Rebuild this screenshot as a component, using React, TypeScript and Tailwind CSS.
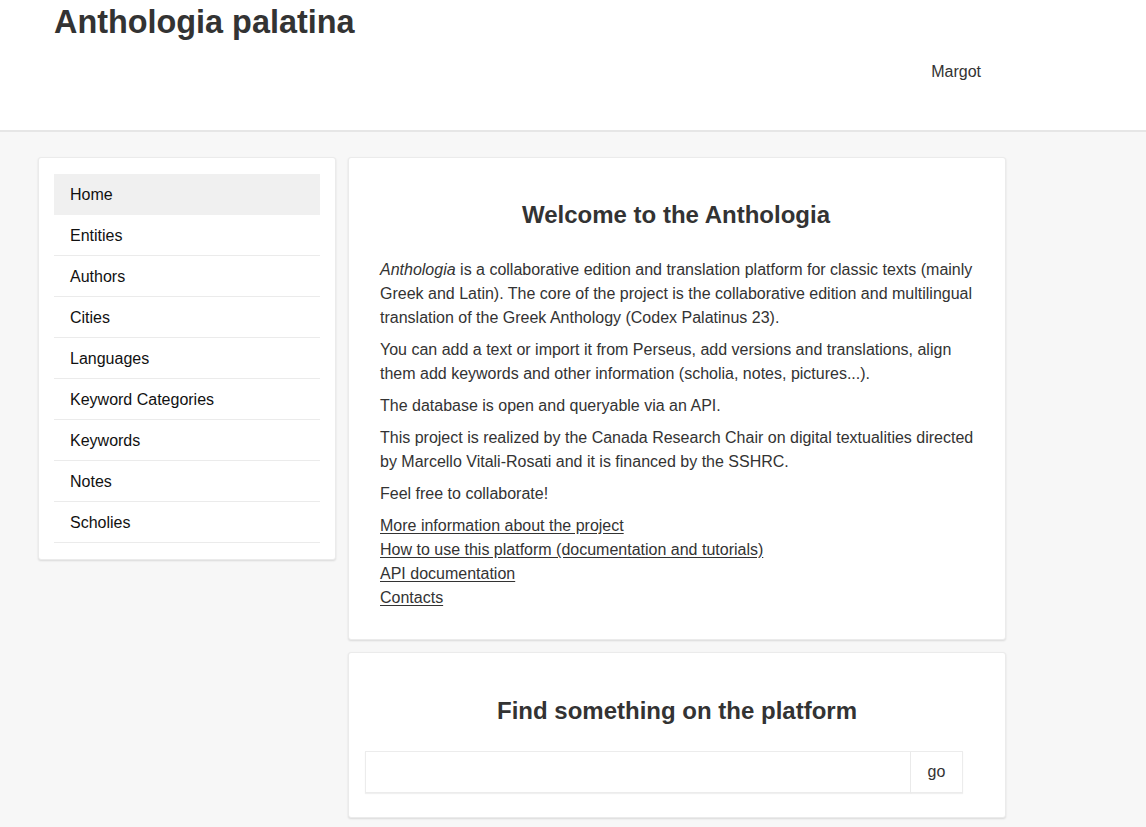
import React from "react";

const navItems = [
  "Home",
  "Entities",
  "Authors",
  "Cities",
  "Languages",
  "Keyword Categories",
  "Keywords",
  "Notes",
  "Scholies",
];

const links = [
  "More information about the project",
  "How to use this platform (documentation and tutorials)",
  "API documentation",
  "Contacts",
];

const card =
  "bg-white border border-[#ebebeb] rounded-[3px] shadow-[0_1px_2px_rgba(0,0,0,0.12)]";

export default function App() {
  return (
    <div className="min-h-[827px] bg-[#f7f7f7] text-[#333] font-['Liberation_Sans',Arial,sans-serif]">
      {/* Header */}
      <header className="h-[132px] bg-white border-b-2 border-[#e6e6e6] flex justify-between pl-[54px] pr-[165px]">
        <h1 className="pt-[5px] text-[32.4px] leading-[35px] font-bold text-[#333]">
          Anthologia palatina
        </h1>
        <nav className="pt-[60px] text-base leading-6">
          <a href="#">Margot</a>
        </nav>
      </header>

      <div className="flex items-start gap-3 pl-[38px] pt-[25px]">
        {/* Sidebar */}
        <aside className={`${card} w-[298px] px-[15px] pt-4 pb-4`}>
          <ul>
            {navItems.map((item, i) => (
              <li
                key={item}
                className={`h-[41px] border-b pl-4 pt-[9px] text-base leading-6 text-[#111] ${
                  i === 0 ? "bg-[#f0f0f0] border-[#f0f0f0]" : "border-[#ebebeb]"
                }`}
              >
                {item}
              </li>
            ))}
          </ul>
        </aside>

        <main className="flex flex-col gap-3 w-[658px]">
          {/* Welcome */}
          <section className={`${card} pl-[31px] pr-[25px] pt-[44px] pb-[29px]`}>
            <h2 className="text-center pr-2 text-2xl leading-[26px] font-bold text-[#333]">
              Welcome to the Anthologia
            </h2>
            <div className="mt-[30px] text-base leading-6">
              <p className="mb-2">
                <em>Anthologia</em> is a collaborative edition and translation platform for classic
                texts (mainly Greek and Latin). The core of the project is the collaborative edition
                and multilingual translation of the Greek Anthology (Codex Palatinus 23).
              </p>
              <p className="mb-2">
                You can add a text or import it from Perseus, add versions and translations, align
                them add keywords and other information (scholia, notes, pictures...).
              </p>
              <p className="mb-2">The database is open and queryable via an API.</p>
              <p className="mb-2">
                This project is realized by the Canada Research Chair on digital textualities
                directed by Marcello Vitali-Rosati and it is financed by the SSHRC.
              </p>
              <p className="mb-2">Feel free to collaborate!</p>
              <ul>
                {links.map((l) => (
                  <li key={l}>
                    <a href="#" className="underline underline-offset-2">
                      {l}
                    </a>
                  </li>
                ))}
              </ul>
            </div>
          </section>

          {/* Search */}
          <section className={`${card} px-4 pt-[45px] pb-6`}>
            <h2 className="text-center text-2xl leading-[26px] font-bold text-[#333]">
              Find something on the platform
            </h2>
            <form className="mt-[27px] flex w-[598px] h-[42px]">
              <input
                type="text"
                className="flex-1 border border-[#ececec] shadow-[0_1px_1px_rgba(0,0,0,0.06)] outline-none px-3"
              />
              <button
                type="button"
                className="w-[52px] border border-l-0 border-[#ececec] shadow-[0_1px_1px_rgba(0,0,0,0.06)] text-base text-[#333] bg-white"
              >
                go
              </button>
            </form>
          </section>
        </main>
      </div>
    </div>
  );
}
